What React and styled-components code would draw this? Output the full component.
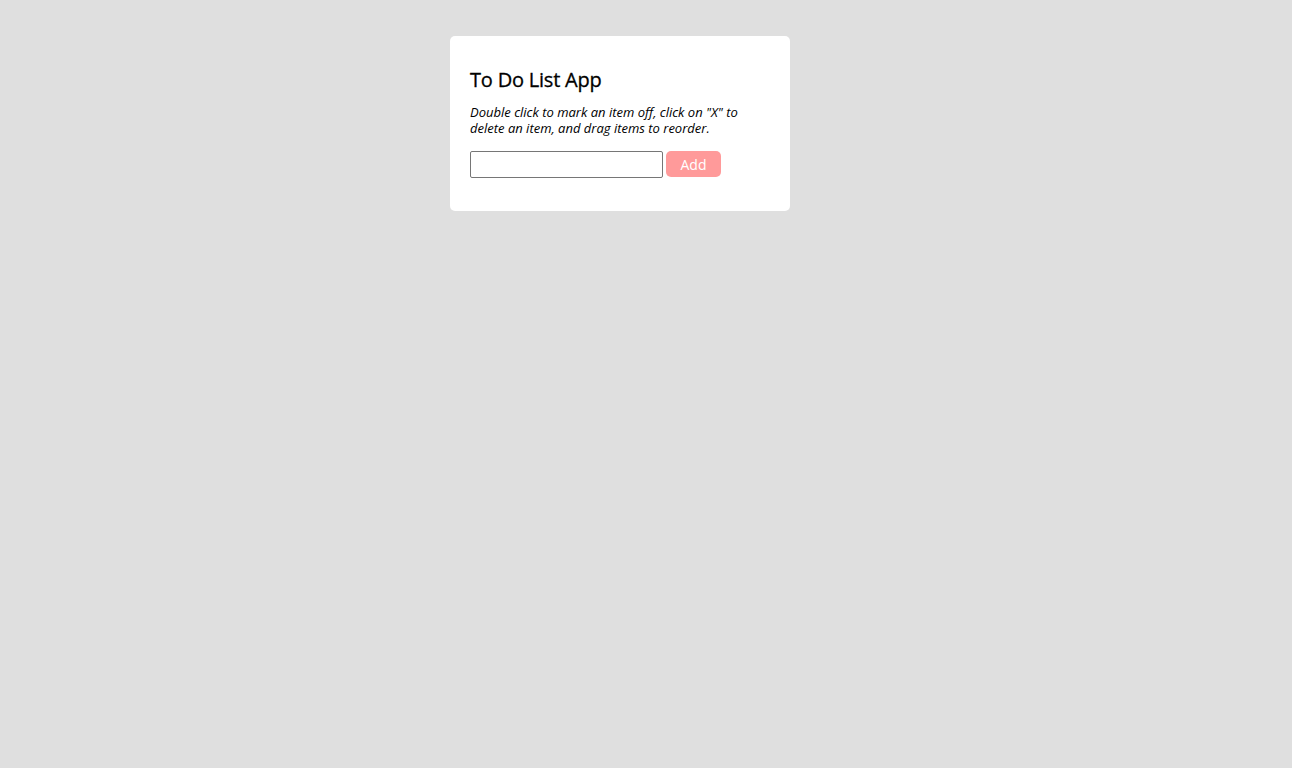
import React from "react";
import styled, { createGlobalStyle } from "styled-components";

const Global = createGlobalStyle`
  html, body { margin: 0; padding: 0; background: #dfdfdf; }
  body { font-family: "Open Sans", "Liberation Sans", sans-serif; }
`;

const Page = styled.div`
  display: flex;
  justify-content: center;
  align-items: flex-start;
  padding: 36px 52px 0 0;
  min-height: 768px;
  box-sizing: border-box;
`;

const Card = styled.div`
  width: 340px;
  box-sizing: border-box;
  background: #fff;
  border-radius: 5px;
  padding: 30px 20px 33px;
`;

const Title = styled.h2`
  margin: 0;
  font-size: 20px;
  line-height: 27px;
  font-weight: 400;
  letter-spacing: -0.2px;
  -webkit-text-stroke: 0.3px #000;
  color: #000;
`;

const Hint = styled.p`
  margin: 11px 0 15px;
  font-size: 13px;
  line-height: 16px;
  font-style: italic;
  color: #000;
`;

const Row = styled.form`
  display: flex;
  align-items: flex-start;
  gap: 3px;
`;

const Input = styled.input`
  width: 193px;
  height: 27px;
  box-sizing: border-box;
  border: 1px solid #767676;
  border-radius: 2px;
  padding: 2px 4px;
  font-family: inherit;
  font-size: 13px;
  outline: none;
`;

const Button = styled.button`
  width: 55px;
  height: 26px;
  border: none;
  border-radius: 5px;
  background: #ff9a9a;
  color: #fff;
  font-family: inherit;
  font-size: 14px;
  padding: 0;
  cursor: pointer;
`;

export default function App() {
  return (
    <>
      <Global />
      <Page>
        <Card>
          <Title>To Do List App</Title>
          <Hint>
            Double click to mark an item off, click on "X" to delete an item, and drag items to reorder.
          </Hint>
          <Row onSubmit={(e) => e.preventDefault()}>
            <Input type="text" />
            <Button type="submit">Add</Button>
          </Row>
        </Card>
      </Page>
    </>
  );
}
